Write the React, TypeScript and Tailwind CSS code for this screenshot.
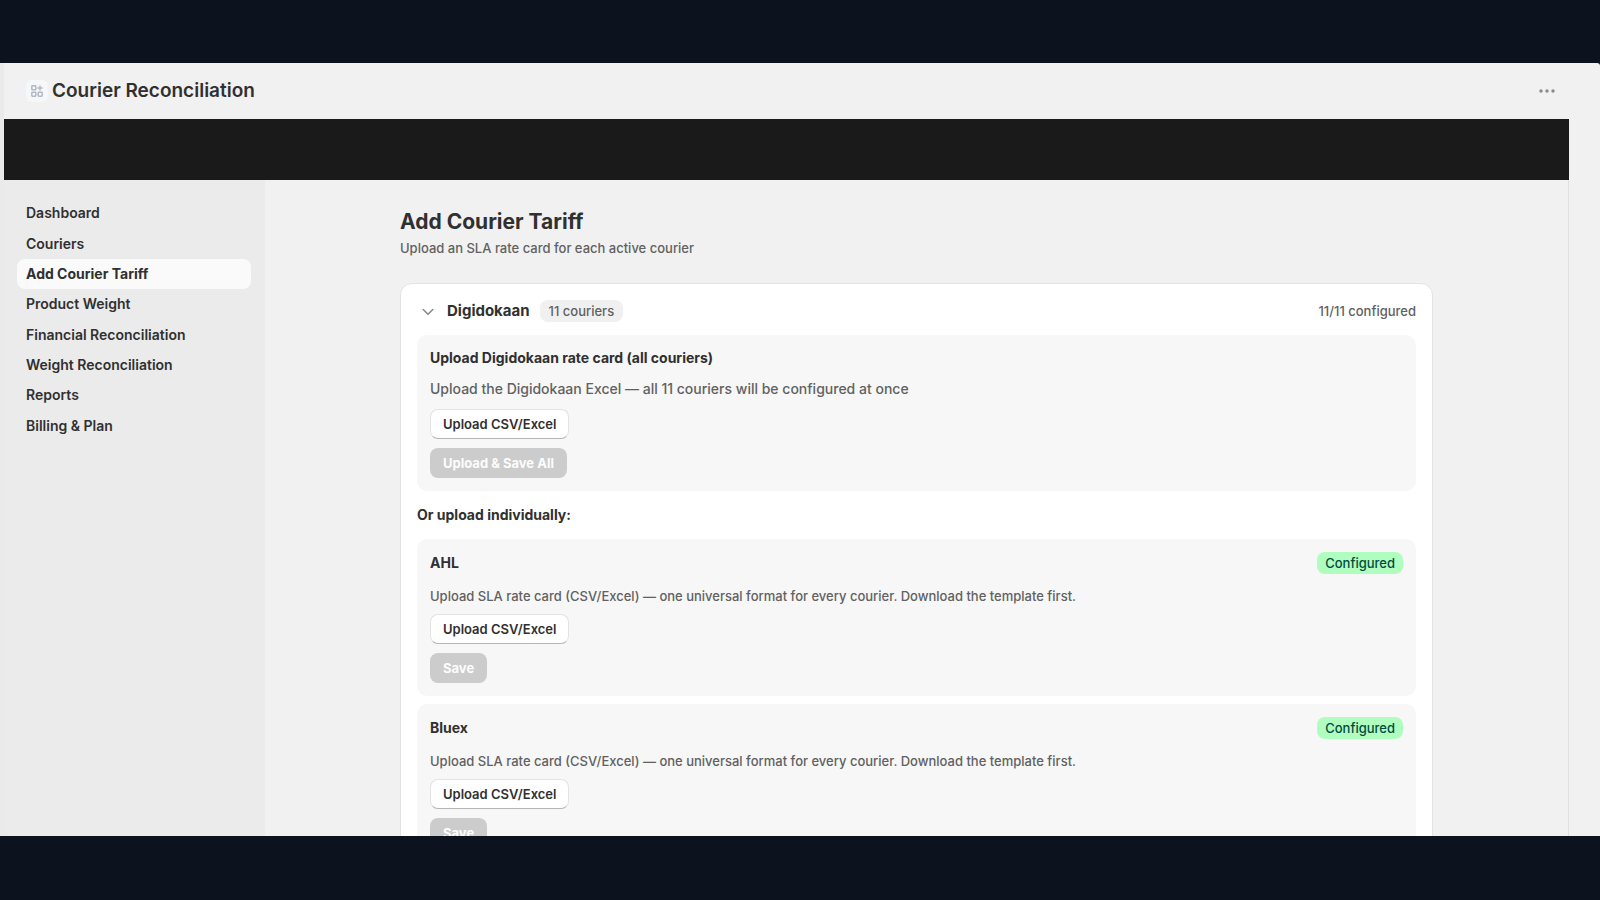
const navItems = [
  'Dashboard',
  'Couriers',
  'Add Courier Tariff',
  'Product Weight',
  'Financial Reconciliation',
  'Weight Reconciliation',
  'Reports',
  'Billing & Plan',
];

const couriers = ['AHL', 'Bluex'];

function AppIcon() {
  return (
    <span className="flex size-[22px] items-center justify-center rounded-md bg-[#f5f7f9]">
      <svg viewBox="0 0 12 12" className="size-3" fill="none" stroke="#b0bac4" strokeWidth="1.5" aria-hidden="true">
        <rect x="0.8" y="0.8" width="4" height="4" rx="0.6" />
        <rect x="0.8" y="7.2" width="4" height="4" rx="0.6" />
        <rect x="7.2" y="7.2" width="4" height="4" rx="0.6" />
        <path d="M9 0.9v4.2M6.9 3h4.2" strokeLinecap="round" />
      </svg>
    </span>
  );
}

function UploadButton() {
  return (
    <button
      type="button"
      className="h-[30px] rounded-lg border border-[#e3e3e3] border-b-[#b5b5b5] bg-white px-3 text-[13px] leading-5 font-semibold text-[#303030]"
    >
      Upload CSV/Excel
    </button>
  );
}

function SaveButton({ label }: { label: string }) {
  return (
    <button type="button" disabled className="h-[30px] rounded-lg bg-[#cccccc] px-[13px] text-[13px] leading-5 font-bold text-[#fcfcfc]">
      {label}
    </button>
  );
}

function CourierPanel({ name }: { name: string }) {
  return (
    <section className="rounded-[10px] bg-[#f7f7f7] p-[13px]">
      <div className="flex items-center justify-between">
        <h3 className="text-[14px] leading-[22px] font-bold">{name}</h3>
        <span className="rounded-lg bg-[#affebf] px-2 text-[13px] leading-[22px] font-medium text-[#014b40]">Configured</span>
      </div>
      <p className="mt-3 text-[13px] leading-5 font-[450] text-[#616161]">
        Upload SLA rate card (CSV/Excel) — one universal format for every courier. Download the template first.
      </p>
      <div className="mt-2 flex flex-col items-start gap-[9px]">
        <UploadButton />
        <SaveButton label="Save" />
      </div>
    </section>
  );
}

export default function App() {
  return (
    <div className="flex h-screen flex-col bg-[#0c131f] py-16 pt-[63px] font-['Inter',sans-serif] text-[#303030]">
      <div className="flex min-h-0 flex-1 flex-col overflow-hidden rounded-tr-[3px] border-l-4 border-[#eaeaea] bg-[#f1f1f1]">
        <header className="flex h-14 shrink-0 items-center justify-between pr-11 pl-[22px]">
          <div className="flex items-center gap-1">
            <AppIcon />
            <h1 className="text-[19px] leading-7 font-semibold">Courier Reconciliation</h1>
          </div>
          <button type="button" aria-label="More actions" className="flex h-6 items-center">
            <svg viewBox="0 0 18 4" className="h-1 w-[18px]" fill="#8a8a8a" aria-hidden="true">
              <circle cx="3" cy="2" r="1.7" />
              <circle cx="9" cy="2" r="1.7" />
              <circle cx="15" cy="2" r="1.7" />
            </svg>
          </button>
        </header>
        <div className="mr-[31px] flex min-h-0 flex-1 flex-col">
          <div className="h-[61px] shrink-0 bg-[#1a1a1a]" />
          <div className="flex min-h-0 flex-1 border-r border-[#e0e0e0]">
            <div className="w-[261px] shrink-0 bg-[#ebebeb] py-[18px] pr-[14px] pl-[13px]">
              <nav className="grid min-h-[243px] auto-rows-fr">
                {navItems.map((item) => {
                  const active = item === 'Add Courier Tariff';
                  return (
                    <a
                      key={item}
                      href="#"
                      aria-current={active ? 'page' : undefined}
                      className={
                        active
                          ? 'flex items-center rounded-lg bg-[#fafafa] px-[9px] text-[14px] leading-5 font-bold'
                          : 'flex items-center rounded-lg px-[9px] text-[14px] leading-5 font-semibold'
                      }
                    >
                      {item}
                    </a>
                  );
                })}
              </nav>
            </div>
            <main className="min-w-0 flex-1 overflow-hidden">
              <div className="mx-auto max-w-[1033px] pt-[26px]">
                <h2 className="text-[21px] leading-8 font-bold">Add Courier Tariff</h2>
                <p className="text-[13px] leading-5 font-[450] text-[#616161]">Upload an SLA rate card for each active courier</p>
                <div className="mt-[25px] rounded-xl border border-[#e3e3e3] bg-white p-4">
                  <div className="flex items-center">
                    <button type="button" aria-label="Collapse Digidokaan" className="flex w-[30px] items-center pl-[5px]">
                      <svg viewBox="0 0 12 8" className="mt-[2px] h-2 w-3" fill="none" stroke="#8a8a8a" strokeWidth="1.6" strokeLinecap="round" strokeLinejoin="round" aria-hidden="true">
                        <path d="M1.2 1.5 6 6.3l4.8-4.8" />
                      </svg>
                    </button>
                    <h3 className="text-[15px] leading-[22px] font-bold">Digidokaan</h3>
                    <span className="ml-[10px] rounded-lg bg-[#f0f0f0] px-[9px] text-[13px] leading-[22px] font-medium text-[#616161]">11 couriers</span>
                    <span className="ml-auto text-[13px] leading-[22px] font-medium text-[#616161]">11/11 configured</span>
                  </div>
                  <section className="mt-[13px] rounded-[10px] bg-[#f7f7f7] p-[13px]">
                    <h3 className="text-[14px] leading-5 font-bold">Upload Digidokaan rate card (all couriers)</h3>
                    <p className="mt-[10px] text-[14px] leading-[22px] font-[450] text-[#616161]">
                      Upload the Digidokaan Excel — all 11 couriers will be configured at once
                    </p>
                    <div className="mt-[9px] flex flex-col items-start gap-[9px]">
                      <UploadButton />
                      <SaveButton label="Upload & Save All" />
                    </div>
                  </section>
                  <p className="my-[13px] text-[14px] leading-[22px] font-bold">Or upload individually:</p>
                  <div className="flex flex-col gap-2">
                    {couriers.map((name) => (
                      <CourierPanel key={name} name={name} />
                    ))}
                  </div>
                </div>
              </div>
            </main>
          </div>
        </div>
      </div>
    </div>
  );
}
